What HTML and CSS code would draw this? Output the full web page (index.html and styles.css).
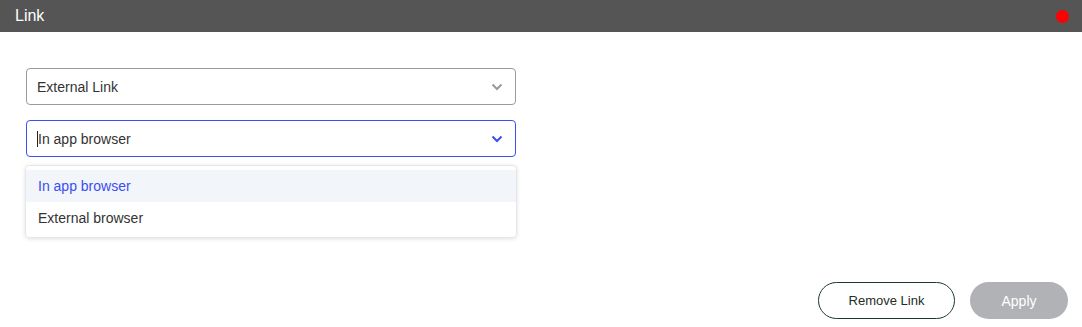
FILE: index.html
```html
<!DOCTYPE html>
<html>
<head>
<meta charset="utf-8">
<link rel="stylesheet" href="styles.css">
</head>
<body>
<div class="header">
  <span class="title">Link</span>
  <span class="dot"></span>
</div>
<div class="content">
  <div class="fields">
    <div class="select">
      <span class="value">External Link</span>
      <svg class="chev" width="12" height="8" viewBox="0 0 12 8"><path d="M1.5 1.5 L6 6 L10.5 1.5" fill="none" stroke="#9a9a9a" stroke-width="2"/></svg>
    </div>
    <div class="select focused">
      <span class="caret"></span><span class="value">In app browser</span>
      <svg class="chev" width="12" height="8" viewBox="0 0 12 8"><path d="M1.5 1.5 L6 6 L10.5 1.5" fill="none" stroke="#3b4ef2" stroke-width="2"/></svg>
    </div>
    <div class="menu">
      <div class="option active">In app browser</div>
      <div class="option">External browser</div>
    </div>
  </div>
  <div class="actions">
    <button class="btn outline">Remove Link</button>
    <button class="btn disabled">Apply</button>
  </div>
</div>
</body>
</html>
```
FILE: styles.css
```css
* { box-sizing: border-box; }
html, body { margin: 0; padding: 0; background: #fff; }
body { font-family: "Liberation Sans", Arial, sans-serif; width: 1082px; height: 327px; overflow: hidden; }
.header {
  height: 32px;
  background: #555555;
  display: flex;
  align-items: center;
  justify-content: space-between;
  padding: 0 13px 0 15px;
}
.title { color: #fff; font-size: 16px; }
.dot { width: 13px; height: 13px; border-radius: 50%; background: #ff0000; }
.content { position: relative; padding: 36px 14px 0 26px; height: 295px; }
.fields { width: 490px; display: flex; flex-direction: column; }
.select {
  height: 37px;
  border: 1px solid #9b9b9b;
  border-radius: 4px;
  display: flex;
  align-items: center;
  padding: 0 12px 0 10px;
  font-size: 14px;
  color: #333;
  width: 490px;
}
.select .value { flex: 1; }
.select.focused { border-color: #3b4ef2; margin-top: 15px; }
.caret { width: 1px; height: 16px; background: #222; }
.menu {
  margin: 8px 0 0 -1px;
  border: 1px solid #e6e6e6;
  border-radius: 4px;
  box-shadow: 0 1px 4px rgba(0,0,0,0.12);
  padding: 4px 0 3px;
  width: 492px;
}
.option { height: 32px; display: flex; align-items: center; padding-left: 12px; font-size: 14px; color: #333; }
.option.active { background: #f2f5f9; color: #3b4ef2; }
.actions { position: absolute; right: 14px; top: 250px; display: flex; gap: 15px; }
.btn {
  height: 37px;
  border-radius: 19px;
  font-family: "Liberation Sans", Arial, sans-serif;
  font-size: 13px;
  cursor: pointer;
}
.btn.outline { width: 137px; background: #fff; border: 1px solid #1e3a2f; color: #1d2d26; }
.btn.disabled { width: 98px; background: #b1b2b5; border: none; color: #fff; font-size: 14px; }
```
